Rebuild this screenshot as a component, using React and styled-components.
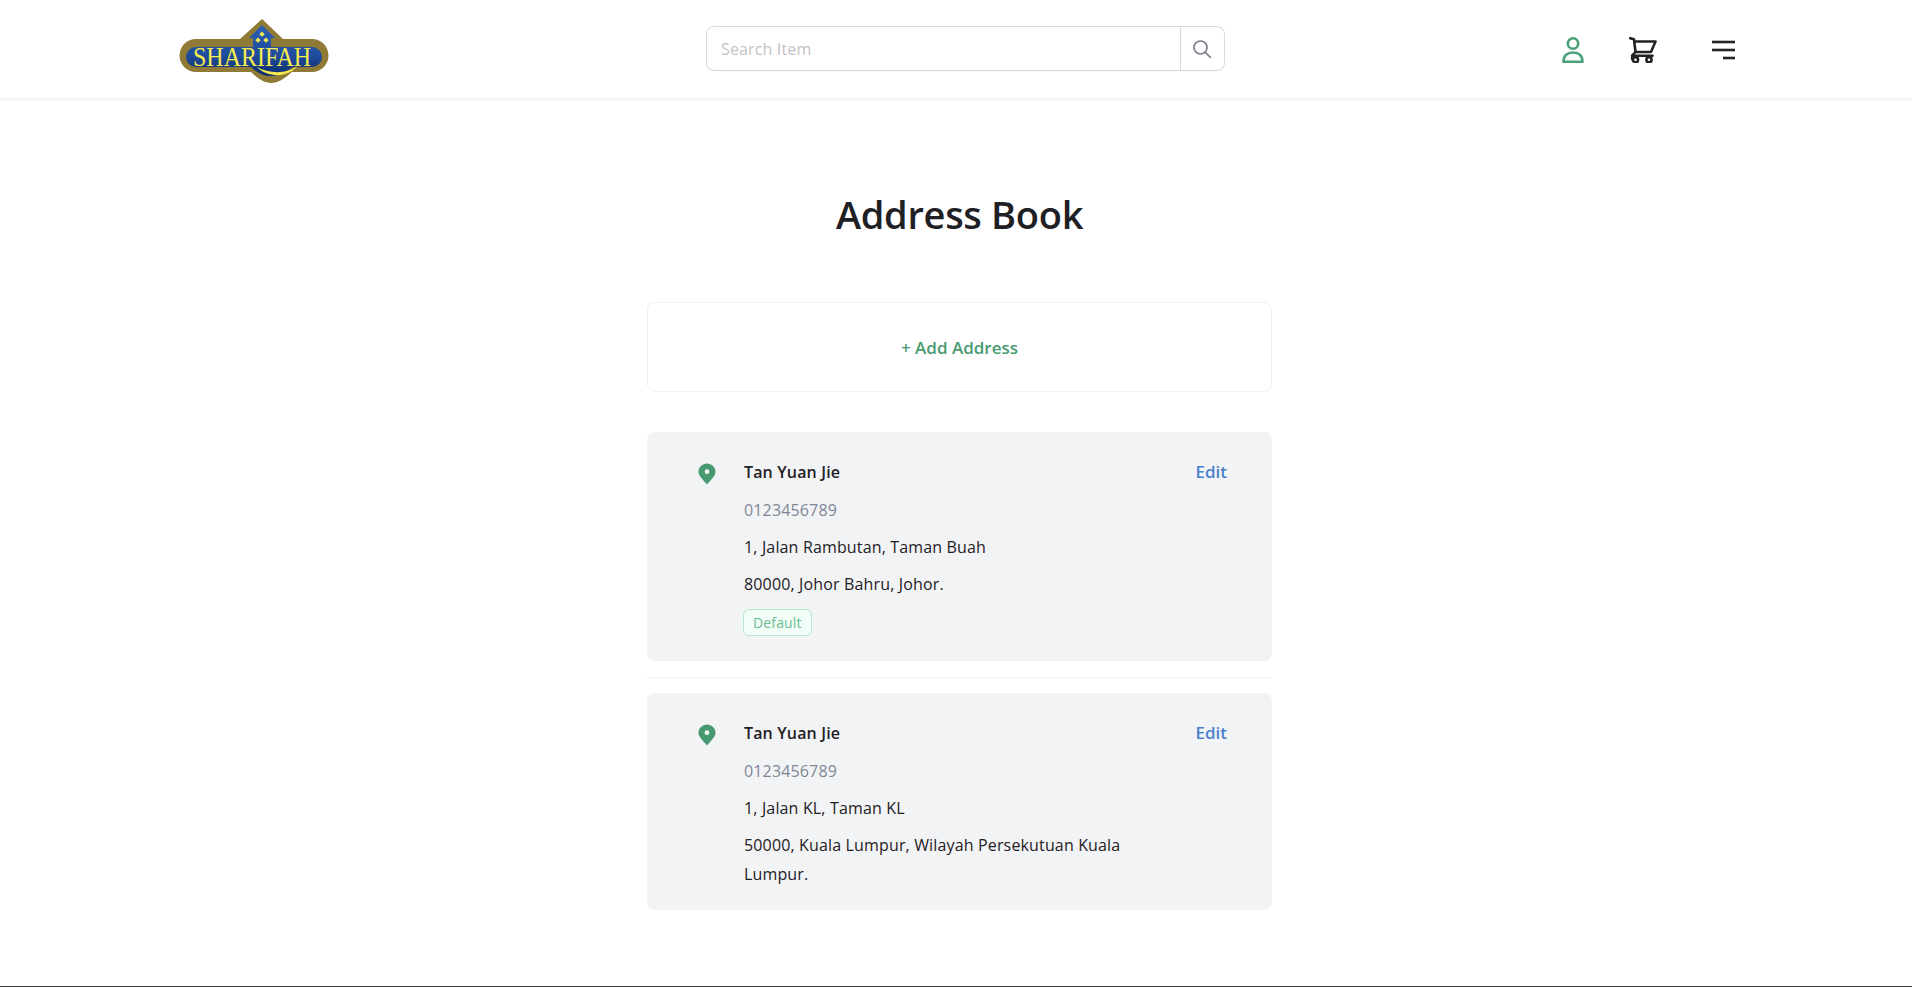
import React from 'react';
import styled, { createGlobalStyle } from 'styled-components';

const GlobalStyle = createGlobalStyle`
  html, body { margin: 0; padding: 0; background: #fff; }
  body { font-family: "Open Sans", "Noto Sans", sans-serif; color: #1f2024; }
  * { box-sizing: border-box; }
`;

const Page = styled.div`
  height: 987px;
  border-bottom: 1px solid #3a3a3a;
  overflow: hidden;
`;

const Header = styled.header`
  height: 98px;
  display: grid;
  grid-template-columns: 706px 519px 1fr;
  align-items: center;
  box-shadow: 0 1px 4px rgba(0, 0, 0, 0.1);
`;

const LogoWrap = styled.div`
  padding: 4px 0 0 179px;
  display: flex;
  align-items: center;
`;

const SearchBar = styled.div`
  height: 45px;
  margin-top: -1px;
  display: flex;
  border: 1px solid #d8d9dc;
  border-radius: 8px;
  box-shadow: 0 1px 1px rgba(0, 0, 0, 0.02);
`;

const SearchInput = styled.input`
  flex: 1;
  min-width: 0;
  border: 0;
  outline: 0;
  background: transparent;
  padding: 0 14px;
  font-family: inherit;
  font-size: 16px;
  letter-spacing: 0.15px;
  &::placeholder { color: #c2c3c6; opacity: 1; }
`;

const SearchButton = styled.button`
  width: 44px;
  border: 0;
  border-left: 1px solid #d8d9dc;
  background: transparent;
  padding: 0 2px 0 0;
  display: flex;
  align-items: center;
  justify-content: center;
`;

const IconRow = styled.div`
  display: flex;
  align-items: center;
  padding: 2px 0 0 337px;
`;

const IconSlot = styled.div`
  width: ${(p) => p.$w}px;
  display: flex;
  align-items: center;
`;

const Main = styled.main`
  width: 632px;
  margin: 0 auto;
  padding-left: 7px;
`;

const Title = styled.h1`
  margin: 0;
  padding-top: 90px;
  height: 204px;
  text-align: center;
  font-size: 38px;
  line-height: 52px;
  font-weight: 600;
  letter-spacing: -0.3px;
  color: #1f2024;
`;

const AddBox = styled.div`
  height: 90px;
  padding-top: 1px;
  display: flex;
  align-items: center;
  justify-content: center;
  border: 1px solid #f0f1f3;
  border-radius: 8px;
  color: #479a70;
  font-size: 17px;
  font-weight: 600;
`;

const List = styled.div`
  margin-top: 40px;
`;

const Divider = styled.hr`
  margin: 16px 0 15px;
  border: 0;
  border-top: 1px solid #f0f1f3;
`;

const Card = styled.article`
  display: grid;
  grid-template-columns: 97px 1fr 53px;
  padding: 22px 45px 16px 0;
  background: #f2f3f5;
  border-radius: 8px;
`;

const PinCol = styled.div`
  padding: 9px 0 0 51px;
`;

const Body = styled.div`
  padding-right: 20px;
  font-size: 16px;
  letter-spacing: 0.15px;
`;

const Name = styled.div`
  font-weight: 600;
  line-height: 37.5px;
  color: #1f2024;
`;

const Phone = styled.div`
  line-height: 37.5px;
  color: #7f8797;
`;

const Line = styled.div`
  padding: 3.75px 0;
  line-height: 29.5px;
  color: #1f2024;
`;

const Badge = styled.span`
  display: block;
  width: fit-content;
  margin: 6px 0 9px -1px;
  height: 27px;
  padding: 0 9px;
  border: 1px solid #b5e8ca;
  border-radius: 6px;
  background: #f3fdf7;
  color: #6bc091;
  font-size: 14px;
  line-height: 25px;
`;

const EditLink = styled.a`
  text-align: right;
  color: #4a82cb;
  font-size: 17px;
  font-weight: 600;
  line-height: 35px;
`;

const Logo = () => (
  <svg width="150" height="64" viewBox="0 0 150 64">
    <defs>
      <linearGradient id="logoBlue" x1="0" y1="0" x2="0" y2="1">
        <stop offset="0" stopColor="#2a5fb4" />
        <stop offset="0.6" stopColor="#1f4c9c" />
        <stop offset="1" stopColor="#0f2c6c" />
      </linearGradient>
    </defs>
    <path d="M83 0 L104 20 H133 A16.5 16.5 0 0 1 133 53 H113 C105 60 99 64 92 64 C85 64 79 60 72 53 H17 A16.5 16.5 0 0 1 17 20 H61 Z" fill="#8f7b35" />
    <path d="M83 6 L96 19 H92 V28 H133 A10 10 0 0 1 133 48 H114 C106 54 99 57 92 57 C85 57 78 54 72 48 H17 A10 10 0 0 1 17 28 H74 V19 H70 Z" fill="url(#logoBlue)" />
    <rect x="81.2" y="13.2" width="3.8" height="3.8" transform="rotate(45 83 15)" fill="#f4e94e" />
    <rect x="77.2" y="19.2" width="3.8" height="3.8" transform="rotate(45 79 21)" fill="#f4e94e" />
    <rect x="85.2" y="19.2" width="3.8" height="3.8" transform="rotate(45 87 21)" fill="#f4e94e" />
    <text transform="translate(14 47) scale(1 1.17)" fontFamily="'Liberation Serif', serif" fontSize="24" fill="#f6ec4f">SHARIFAH</text>
    <path d="M78 48 C90 55 108 55 118 47 C110 59 88 59 78 48 Z" fill="#f4e94e" />
  </svg>
);

const SearchIcon = () => (
  <svg width="20" height="20" viewBox="0 0 20 20" fill="none" stroke="#7b7f8a" strokeWidth="1.7" strokeLinecap="round">
    <circle cx="8.5" cy="8.5" r="6.5" />
    <path d="M13.3 13.3 L18.5 18.5" />
  </svg>
);

const UserIcon = () => (
  <svg width="22" height="26" viewBox="0 0 22 26" fill="none" stroke="#48a078" strokeWidth="2.6" strokeLinejoin="round">
    <circle cx="11" cy="6.5" r="5.2" />
    <path d="M1.5 24.7 C1.5 18.5 5.5 15.5 11 15.5 C16.5 15.5 20.5 18.5 20.5 24.7 Z" />
  </svg>
);

const CartIcon = () => (
  <svg width="28" height="26" viewBox="0 0 28 26" fill="none" stroke="#232326" strokeWidth="2.6" strokeLinecap="round" strokeLinejoin="round">
    <path d="M1.2 1.2 L5 2.2 L6.5 15 L3.2 18.7 V22" />
    <path d="M5.5 4.5 H26.5 L22 15 H6.5" />
    <path d="M3.2 18.7 H23.5" />
    <circle cx="6.5" cy="22.7" r="2.6" />
    <circle cx="20" cy="22.7" r="2.6" />
  </svg>
);

const MenuIcon = () => (
  <svg width="23" height="20" viewBox="0 0 23 20" fill="none" stroke="#232326" strokeWidth="2.6">
    <path d="M0 2 H23" />
    <path d="M0 10 H23" />
    <path d="M11 18 H23" />
  </svg>
);

const PinIcon = () => (
  <svg width="18" height="22" viewBox="0 0 18 22">
    <path fillRule="evenodd" d="M9 0.5 C13.7 0.5 17.5 4.2 17.5 8.8 C17.5 12.6 14.2 15.5 9 21.5 C3.8 15.5 0.5 12.6 0.5 8.8 C0.5 4.2 4.3 0.5 9 0.5 Z M9 6.3 A2.4 2.4 0 1 0 9 11.1 A2.4 2.4 0 1 0 9 6.3 Z" fill="#479a70" />
  </svg>
);

const addresses = [
  { name: 'Tan Yuan Jie', phone: '0123456789', line1: '1, Jalan Rambutan, Taman Buah', line2: '80000, Johor Bahru, Johor.', isDefault: true },
  { name: 'Tan Yuan Jie', phone: '0123456789', line1: '1, Jalan KL, Taman KL', line2: '50000, Kuala Lumpur, Wilayah Persekutuan Kuala Lumpur.' },
];

const AddressCard = ({ item }) => (
  <Card>
    <PinCol><PinIcon /></PinCol>
    <Body>
      <Name>{item.name}</Name>
      <Phone>{item.phone}</Phone>
      <Line>{item.line1}</Line>
      <Line>{item.line2}</Line>
      {item.isDefault && <Badge>Default</Badge>}
    </Body>
    <EditLink>Edit</EditLink>
  </Card>
);

export default function App() {
  return (
    <Page>
      <GlobalStyle />
      <Header>
        <LogoWrap><Logo /></LogoWrap>
        <SearchBar>
          <SearchInput placeholder="Search Item" />
          <SearchButton><SearchIcon /></SearchButton>
        </SearchBar>
        <IconRow>
          <IconSlot $w={67}><UserIcon /></IconSlot>
          <IconSlot $w={83}><CartIcon /></IconSlot>
          <IconSlot $w={23}><MenuIcon /></IconSlot>
        </IconRow>
      </Header>
      <Main>
        <Title>Address Book</Title>
        <AddBox>+ Add Address</AddBox>
        <List>
          {addresses.map((item, i) => (
            <React.Fragment key={i}>
              {i > 0 && <Divider />}
              <AddressCard item={item} />
            </React.Fragment>
          ))}
        </List>
      </Main>
    </Page>
  );
}
